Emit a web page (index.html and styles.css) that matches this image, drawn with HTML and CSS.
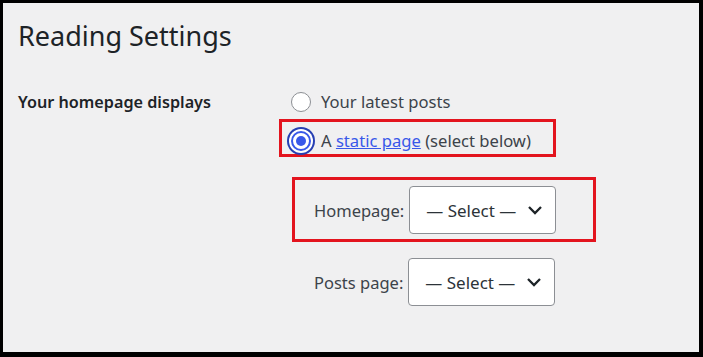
FILE: index.html
```html
<!DOCTYPE html>
<html lang="en">
<head>
  <meta charset="UTF-8">
  <title>Reading Settings</title>
  <link rel="stylesheet" href="styles.css">
</head>
<body>

  <div class="frame">
    <h1 class="page-title">Reading Settings</h1>

    <div class="form-row">
      <div class="row-label">Your homepage displays</div>

      <div class="row-field">
        <label class="choice">
          <input type="radio" name="show_on_front" value="posts">
          <span>Your latest posts</span>
        </label>

        <label class="choice marked">
          <input type="radio" name="show_on_front" value="page" class="focused" checked>
          <span>A <a href="#">static page</a> (select below)</span>
        </label>

        <ul class="page-list">
          <li class="page-item marked">
            <label class="page-label">Homepage:</label>
            <div class="select">
              <span>— Select —</span>
              <svg class="chevron" width="16" height="10" viewBox="0 0 16 10"><path d="M2 2 L8 8 L14 2" fill="none" stroke="#1d2327" stroke-width="2.3"/></svg>
            </div>
          </li>
          <li class="page-item">
            <label class="page-label">Posts page:</label>
            <div class="select">
              <span>— Select —</span>
              <svg class="chevron" width="16" height="10" viewBox="0 0 16 10"><path d="M2 2 L8 8 L14 2" fill="none" stroke="#1d2327" stroke-width="2.3"/></svg>
            </div>
          </li>
        </ul>
      </div>
    </div>
  </div>

</body>
</html>
```

FILE: styles.css
```css
html, body {
  margin: 0;
  height: 100%;
}

body {
  font-family: "Noto Sans", "Open Sans", sans-serif;
  color: #3c434a;
  background: #000;
}

.frame {
  box-sizing: border-box;
  height: 357px;
  border-style: solid;
  border-color: #000;
  border-width: 3px 4px 5px 3px;
  background: #f0f0f1;
  padding: 15px 0 0 15px;
}

.page-title {
  margin: 0;
  font-size: 27px;
  line-height: 36px;
  font-weight: 400;
  color: #1d2327;
}

.form-row {
  display: flex;
  margin-top: 38px;
}

.row-label {
  width: 273px;
  flex-shrink: 0;
  font-size: 16.2px;
  line-height: 20px;
  font-weight: 600;
  color: #1d2327;
}

.choice {
  display: flex;
  align-items: center;
  gap: 10px;
  font-size: 16.6px;
  line-height: 20px;
  width: fit-content;
}

.choice + .choice {
  margin-top: 7px;
}

.choice.marked {
  margin-left: -12px;
  padding: 9px 22px 3px 9px;
  border: 3px solid #e3141e;
}

.choice a {
  color: #3858e9;
}

input[type="radio"] {
  appearance: none;
  margin: 0;
  width: 20px;
  height: 20px;
  border: 1px solid #8c8f94;
  border-radius: 50%;
  background: #fff;
  box-sizing: border-box;
  position: relative;
}

input[type="radio"]:checked {
  border: 2px solid #3858e9;
}

input[type="radio"]:checked::before {
  content: "";
  position: absolute;
  left: 3px;
  top: 3px;
  width: 10px;
  height: 10px;
  border-radius: 50%;
  background: #3858e9;
}

input[type="radio"].focused {
  box-shadow: 0 0 0 2px #fff, 0 0 0 4px #263fb3;
}

.page-list {
  list-style: none;
  margin: 20px 0 0 1px;
  padding: 0;
}

.page-item {
  display: flex;
  align-items: center;
  gap: 5px;
  width: 304px;
  box-sizing: border-box;
  padding: 6px 0 5px 19px;
  border: 3px solid transparent;
}

.page-item + .page-item {
  margin-top: 7px;
}

.page-item.marked {
  border-color: #e3141e;
}

.page-label {
  font-size: 16.5px;
}

.select {
  box-sizing: border-box;
  width: 147px;
  height: 48px;
  display: flex;
  align-items: center;
  justify-content: space-between;
  padding: 0 12px 0 16px;
  background: #fff;
  border: 1px solid #8c8f94;
  border-radius: 4px;
  font-size: 17px;
  color: #2c3338;
}
```
